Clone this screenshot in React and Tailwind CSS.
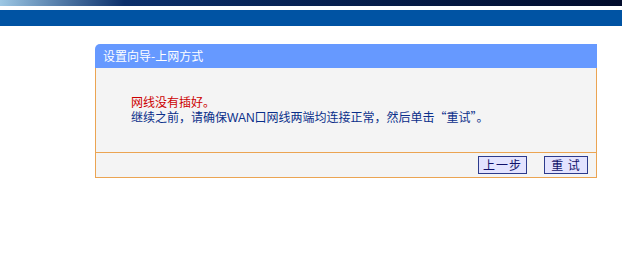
import React from 'react';

const cn = { fontFamily: '"SimSun", "Noto Sans CJK SC", sans-serif' };
const body = { fontFamily: '"Liberation Sans", "Noto Sans CJK SC", sans-serif' };

const Btn = ({ children, w }) => (
    <button
        className={`h-[18px] ${w} border border-[#2c3a8c] bg-[#e3e3ff] text-[12px] leading-[16px] text-[#10106a] tracking-[1px]`}
        style={cn}
    >
        {children}
    </button>
);

const App = () => {
    return (
        <div className="w-[622px] h-[276px] bg-white overflow-hidden" style={cn}>
            {/* banner strip */}
            <div className="h-[6px] bg-gradient-to-r from-[#9ec8e4] via-[#0b2f6a] via-20% to-[#020c2c]" />
            <div className="h-[4px] bg-white" />
            <div className="h-[16px] bg-[#0053a3]" />

            <div className="mt-[18px] ml-[95px] w-[502px]">
                <div className="h-[24px] rounded-tl-[5px] bg-[#6699ff] pl-[8px] flex items-center text-[12px] text-white">
                    设置向导-上网方式
                </div>
                <div className="bg-[#f4f4f4] border-x border-b border-[#eba452]">
                    <div className="h-[84px] pt-[28px] pl-[35px] text-[12px] leading-[14px]" style={body}>
                        <div className="text-[#cc0000]">网线没有插好。</div>
                        <div className="text-[#0a2f8a]">
                            继续之前，请确保WAN口网线两端均连接正常，然后单击<span style={cn}>“重试”</span>。
                        </div>
                    </div>
                    <div className="h-[25px] border-t border-[#eba452] flex items-center justify-end gap-[17px] pr-[8px]">
                        <Btn w="w-[49px]">上一步</Btn>
                        <Btn w="w-[44px]">重 试</Btn>
                    </div>
                </div>
            </div>
        </div>
    );
};

export default App;
